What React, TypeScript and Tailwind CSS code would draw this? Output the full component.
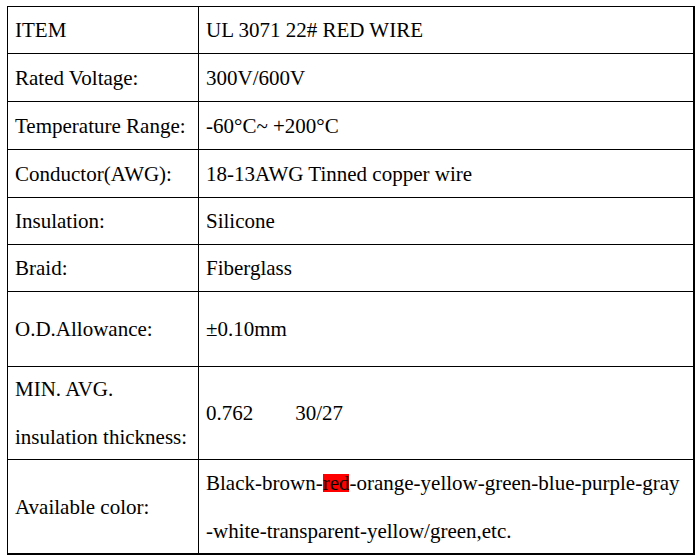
import React from "react";

const rows: { label: React.ReactNode; value: React.ReactNode; h: string }[] = [
  { label: "ITEM", value: "UL 3071 22# RED WIRE", h: "h-[47px]" },
  { label: "Rated Voltage:", value: "300V/600V", h: "h-[48px]" },
  { label: "Temperature Range:", value: "-60°C~ +200°C", h: "h-[48px]" },
  { label: "Conductor(AWG):", value: "18-13AWG Tinned copper wire", h: "h-[48px]" },
  { label: "Insulation:", value: "Silicone", h: "h-[47px]" },
  { label: "Braid:", value: "Fiberglass", h: "h-[47px]" },
  { label: "O.D.Allowance:", value: "±0.10mm", h: "h-[75px]" },
  {
    label: (
      <>
        MIN. AVG.
        <br />
        insulation thickness:
      </>
    ),
    value: (
      <>
        0.762<span className="ml-[42px]">30/27</span>
      </>
    ),
    h: "h-[93px]",
  },
  {
    label: "Available color:",
    value: (
      <>
        Black-brown-
        <span className="inline-block bg-[#ff0000] leading-[18px] h-[18px]">red</span>
        -orange-yellow-green-blue-purple-gray
        <br />
        -white-transparent-yellow/green,etc.
      </>
    ),
    h: "h-[93px]",
  },
];

export default function App() {
  return (
    <div className="w-[700px] h-[560px] bg-white pt-[6px] pl-[7px] font-['Liberation_Serif',serif] text-black text-[21px]">
      <div className="w-[688px] border-l border-t border-r-2 border-b-2 border-black">
        {rows.map((r, i) => (
          <div
            key={i}
            className={`flex ${r.h} ${i < rows.length - 1 ? "border-b border-black" : ""}`}
          >
            <div className="w-[191px] border-r border-black flex items-center pl-[7px] leading-[48px] whitespace-nowrap">
              <div>{r.label}</div>
            </div>
            <div className="flex-1 flex items-center pl-[7px] leading-[48px] whitespace-nowrap">
              <div>{r.value}</div>
            </div>
          </div>
        ))}
      </div>
    </div>
  );
}
